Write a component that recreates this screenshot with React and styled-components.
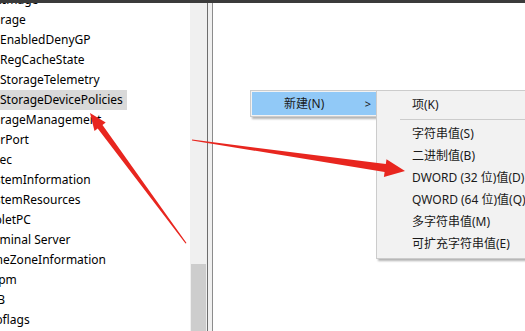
import React from 'react';
import styled, { createGlobalStyle } from 'styled-components';

const GlobalStyle = createGlobalStyle`
  html, body {
    margin: 0;
    padding: 0;
    overflow: hidden;
    background: #ffffff;
  }
`;

// Window frame
const Window = styled.div`
  position: relative;
  width: 525px;
  height: 331px;
  display: flex;
  flex-direction: column;
  overflow: hidden;
  font-family: "Noto Sans", "Noto Sans CJK SC", sans-serif;
  font-size: 12px;
  color: #000;
`;

const TopBar = styled.div`
  height: 3px;
  flex: none;
  background: #3b3b3b;
`;

const Body = styled.div`
  flex: 1;
  display: flex;
  min-height: 0;
`;

// Left tree (scrolled sideways, so the start of the names is hidden)
const TreePane = styled.div`
  width: 190px;
  flex: none;
  overflow: hidden;
  background: #fff;
`;

const TreeList = styled.ul`
  list-style: none;
  margin: -13px 0 0 -18px;
  padding: 0;
  white-space: nowrap;
`;

const TreeRow = styled.li`
  height: 20px;
  line-height: 20px;
  padding-left: ${p => p.$level * 18}px;
`;

const TreeLabel = styled.span`
  display: inline-block;
  padding: 0 4px 0 0;
  background: ${p => (p.$selected ? '#d9d9d9' : 'transparent')};
`;

const ScrollBar = styled.div`
  width: 17px;
  flex: none;
  display: flex;
  flex-direction: column;
  justify-content: flex-end;
  background: #f0f0f0;
`;

const Thumb = styled.div`
  height: 67px;
  margin-left: 1px;
  width: 15px;
  background: #cdcdcd;
`;

const Splitter = styled.div`
  width: 4px;
  flex: none;
  background: #f0f0f0;
  border-left: 1px solid #6e6e6e;
  border-right: 1px solid #8c8c8c;
`;

// Right list pane
const ListPane = styled.div`
  position: relative;
  flex: 1;
  background: #fff;
`;

const Menu = styled.div`
  position: absolute;
  left: ${p => p.$left}px;
  top: ${p => p.$top}px;
  width: ${p => p.$width}px;
  padding: ${p => p.$pad}px 0;
  background: #f2f2f2;
  border: 1px solid #cccccc;
  box-shadow: 2px 2px 2px rgba(0, 0, 0, 0.3);
`;

const MenuItem = styled.div`
  position: relative;
  height: ${p => p.$height}px;
  line-height: ${p => p.$height}px;
  margin: 0 1px;
  padding-left: ${p => p.$indent}px;
  background: ${p => (p.$active ? '#91c9f7' : 'transparent')};
  color: #1a1a1a;
  white-space: nowrap;
`;

const SubArrow = styled.span`
  position: absolute;
  right: 9px;
  top: 0;
  font-size: 11px;
`;

const Separator = styled.div`
  height: 1px;
  margin: 3px 0 3px 23px;
  background: #cccccc;
`;

const Overlay = styled.svg`
  position: absolute;
  left: 0;
  top: 0;
  pointer-events: none;
`;

const tree = [
  { name: 'StillImage', level: 0 },
  { name: 'Storage', level: 0 },
  { name: 'EnabledDenyGP', level: 1 },
  { name: 'RegCacheState', level: 1 },
  { name: 'StorageTelemetry', level: 1 },
  { name: 'StorageDevicePolicies', level: 1, selected: true },
  { name: 'StorageManagement', level: 0 },
  { name: 'StorPort', level: 0 },
  { name: 'StSec', level: 0 },
  { name: 'SystemInformation', level: 0 },
  { name: 'SystemResources', level: 0 },
  { name: 'TabletPC', level: 0 },
  { name: 'Terminal Server', level: 0 },
  { name: 'TimeZoneInformation', level: 0 },
  { name: 'Ubpm', level: 0 },
  { name: 'USB', level: 0 },
  { name: 'usbflags', level: 0 },
];

const subItems = [
  '字符串值(S)',
  '二进制值(B)',
  'DWORD (32 位)值(D)',
  'QWORD (64 位)值(Q)',
  '多字符串值(M)',
  '可扩充字符串值(E)',
];

const App = () => {
  return (
    <Window>
      <GlobalStyle />
      <TopBar />
      <Body>
        <TreePane>
          <TreeList>
            {tree.map(t => (
              <TreeRow key={t.name} $level={t.level}>
                <TreeLabel $selected={t.selected}>{t.name}</TreeLabel>
              </TreeRow>
            ))}
          </TreeList>
        </TreePane>
        <ScrollBar>
          <Thumb />
        </ScrollBar>
        <Splitter />
        <ListPane>
          <Menu $left={37} $top={87} $width={130} $pad={1}>
            <MenuItem $height={23} $indent={32} $active>
              新建(N)
              <SubArrow>&gt;</SubArrow>
            </MenuItem>
          </Menu>
          <Menu $left={163} $top={87} $width={180} $pad={3}>
            <MenuItem $height={22} $indent={34}>项(K)</MenuItem>
            <Separator />
            {subItems.map(s => (
              <MenuItem key={s} $height={22} $indent={34}>{s}</MenuItem>
            ))}
          </Menu>
        </ListPane>
      </Body>
      {/* red annotation arrows drawn over the screenshot */}
      <Overlay width="525" height="331" viewBox="0 0 525 331">
        <polygon
          fill="#e8261f"
          points="186.5,243 185.5,243.6 97.7,128.5 94.5,130.9 90,113 105.7,122.5 102.5,124.9"
        />
        <polygon
          fill="#e8261f"
          points="192,139.6 192,140.4 384.6,172.1 383.9,177 405,171 386.5,159.2 385.8,164.1"
        />
      </Overlay>
    </Window>
  );
};

export default App;
